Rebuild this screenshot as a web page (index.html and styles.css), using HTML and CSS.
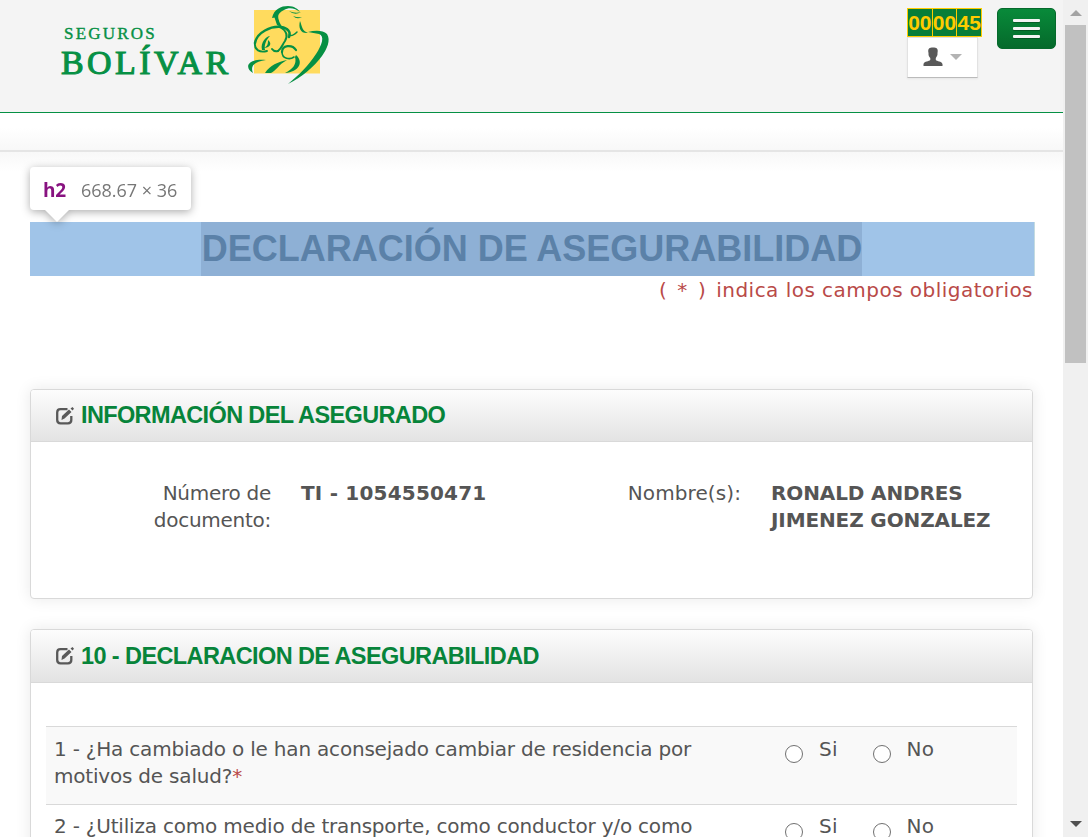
FILE: index.html
```html
<!DOCTYPE html>
<html lang="es">
<head>
<meta charset="utf-8">
<title>Declaración de asegurabilidad</title>
<link rel="stylesheet" href="styles.css">
</head>
<body>
<div class="page">
  <header class="topbar">
    <div class="brand">
      <div class="brand-name"><span class="brand-small">SEGUROS</span><span class="brand-big">BOLÍVAR</span></div>
      <svg class="brand-mark" viewBox="0 0 100 90" width="100" height="90">
        <rect x="14" y="10" width="66" height="63.500" fill="#ffdb5e"/>
        <g fill="#069044">
          <path d="M32 18C34 9 41 6 48 6C54 6 58 9 60 12C55 8 49 7 44 10C40 12 38 14 38 17Z"/>
          <path d="M34 16L38 15C38 20 40 24 43 28L37 25Z"/>
          <path d="M49 11Q55 14 61 12Q55 16 49 11ZM53 16Q58 18 62 17Q57 20 53 16Z"/>
          <path d="M60 21C62 26 62 31 68 33C61 34 58 28 60 21Z"/>
          <path d="M68 32C75 30 83 30 87 34C91 40 87 49 82 56C74 67 62 77 48 84C59 75 69 65 76 54C82 45 85 36 79 34Z"/>
          <path d="M22 50C20 42 27 36 30 36C26 40 24 45 25 50ZM28 40C33 44 29 48 24 48C28 46 28 43 28 40Z"/>
          <path d="M26 60C14 62 10 66 13 73C4 68 7 58 26 60Z"/>
          <path d="M25 73C30 65 38 62 47 60C38 65 36 71 31 73Z"/>
          <path d="M56 55C64 62 59 72 45 73C53 69 57 64 55 57Z"/>
        </g>
        <g fill="none" stroke="#069044" stroke-linecap="round">
          <path stroke-width="2.500" d="M15 43C17 32 31 26 41 27C48 28 51 32 49 37"/>
          <path stroke-width="2" d="M40 27C47 31 48 36 45 41C42 45 42 48 38 51"/>
          <path stroke-width="1.500" d="M49 35Q52 37 57 32"/>
          <path stroke-width="1.900" d="M15 43C14 50 20 53 27 51M32 49Q34 52 38 51"/>
          <path stroke-width="2.200" d="M42 52C42 45 52 44 56 50"/>
          <path stroke-width="1.600" d="M42 52C42 59 50 60 54 57"/>
        </g>
      </svg>
    </div>
    <div class="tools">
      <div class="session">
        <div class="timer"><span>00</span><span>00</span><span>45</span></div>
        <button class="user" type="button" aria-label="Usuario">
          <svg width="20" height="20" viewBox="0 0 20 20"><path fill="#595959" d="M5.500 6C4.500 1.500 6.500 .500 10 .500S15.500 1.500 14.500 6C14.800 9 13.500 9.500 12.800 11V13C14 14.500 18.500 14 19.500 17V19H.500V17C1.500 14 6 14.500 7.300 13V11C6.500 10 5.200 9 5.500 6Z"/></svg>
          <svg width="12" height="6" viewBox="0 0 12 6"><path fill="#b3b3b3" d="M0 0H12L6 6Z"/></svg>
        </button>
      </div>
      <button class="menu" type="button" aria-label="Menú"><i></i><i></i><i></i></button>
    </div>
  </header>
  <div class="strip"></div>
  <main class="content">
    <div class="title-row">
      <h2 class="title"><span>DECLARACIÓN DE ASEGURABILIDAD</span></h2>
      <div class="inspect"><b>h2</b><span>668.67 × 36</span></div>
    </div>
    <p class="hint"><span class="mark">( * ) </span>indica los campos obligatorios</p>

    <section class="card card-info">
      <h3 class="card-head">
        <svg class="edit" width="20" height="20" viewBox="0 0 20 20"><path fill="none" stroke="#595959" stroke-width="2.300" d="M12.500 3.200H5.500Q2.200 3.200 2.200 6.500V14Q2.200 17.300 5.500 17.300H13Q16.300 17.300 16.300 14V10"/><path fill="#595959" d="M7 10L14 3.500L16.500 6L9.500 12.500L6.500 14ZM15.500 2.500L17.500 1L19 2.800L17.500 4.500Z"/></svg>
        <span>INFORMACIÓN DEL ASEGURADO</span>
      </h3>
      <div class="fields">
        <div class="label">Número de<br>documento:</div>
        <div class="value">TI - 1054550471</div>
        <div class="label label-name">Nombre(s):</div>
        <div class="value value-name">RONALD ANDRES<br>JIMENEZ GONZALEZ</div>
      </div>
    </section>

    <section class="card card-questions">
      <h3 class="card-head">
        <svg class="edit" width="20" height="20" viewBox="0 0 20 20"><path fill="none" stroke="#595959" stroke-width="2.300" d="M12.500 3.200H5.500Q2.200 3.200 2.200 6.500V14Q2.200 17.300 5.500 17.300H13Q16.300 17.300 16.300 14V10"/><path fill="#595959" d="M7 10L14 3.500L16.500 6L9.500 12.500L6.500 14ZM15.500 2.500L17.500 1L19 2.800L17.500 4.500Z"/></svg>
        <span>10 - DECLARACION DE ASEGURABILIDAD</span>
      </h3>
      <div class="questions">
        <div class="question">
          <div class="text">1 - ¿Ha cambiado o le han aconsejado cambiar de residencia por<br>motivos de salud?<em>*</em></div>
          <label class="option"><input type="radio" name="q1">Si</label>
          <label class="option"><input type="radio" name="q1">No</label>
        </div>
        <div class="question">
          <div class="text">2 - ¿Utiliza como medio de transporte, como conductor y/o como</div>
          <label class="option"><input type="radio" name="q2">Si</label>
          <label class="option"><input type="radio" name="q2">No</label>
        </div>
      </div>
    </section>
  </main>
</div>
<div class="scrollbar">
  <svg class="arrow" width="12" height="6" viewBox="0 0 12 6"><path fill="#a3a3a3" d="M0 6H12L6 0Z"/></svg>
  <div class="thumb"></div>
  <svg class="arrow arrow-down" width="12" height="6" viewBox="0 0 12 6"><path fill="#505050" d="M0 0H12L6 6Z"/></svg>
</div>
</body>
</html>
```
FILE: styles.css
```css
* { box-sizing: border-box; }
body {
  margin: 0;
  height: 837px;
  overflow: hidden;
  display: flex;
  background: #fff;
  color: #555;
  font: 20px/27px "DejaVu Sans", sans-serif;
}
.page { width: 1063px; height: 837px; overflow: hidden; }

.topbar {
  height: 113px;
  display: flex;
  justify-content: space-between;
  padding-right: 7px;
  background: #f4f4f4;
  border-bottom: 1px solid #069044;
}
.brand { display: flex; padding-left: 61px; }
.brand-name {
  width: 179px;
  padding-top: 23px;
  display: flex;
  flex-direction: column;
  color: #069044;
  font-family: "Liberation Serif", serif;
  white-space: nowrap;
}
.brand-small { padding-left: 3px; font-size: 17px; line-height: 21px; letter-spacing: 2.2px; -webkit-text-stroke: .4px #069044; }
.brand-big { font-size: 34px; line-height: 37px; letter-spacing: 3.4px; -webkit-text-stroke: 1.1px #069044; }
.brand-mark { display: block; }

.tools { display: flex; gap: 15px; padding-top: 8px; }
.session { width: 75px; }
.timer {
  display: flex;
  width: 75px;
  height: 29px;
  border: 1px solid #fc0;
  background: #087e38;
  color: #fc0;
  font: bold 21px/28px "Liberation Sans", sans-serif;
}
.timer span { flex: 1; text-align: center; }
.timer span + span { border-left: 1px solid #fc0; }
.user {
  width: 71px;
  height: 41px;
  display: flex;
  align-items: center;
  justify-content: center;
  gap: 7px;
  padding: 0 0 1px;
  border: 1px solid #e2e2e2;
  border-bottom-color: #bbb;
  background: #fff;
  box-shadow: 0 1px 2px rgba(0,0,0,.06);
}
.menu {
  width: 59px;
  height: 41px;
  display: flex;
  flex-direction: column;
  align-items: center;
  justify-content: center;
  gap: 5px;
  padding: 0;
  border: 1px solid #066a2c;
  border-radius: 5px;
  background: linear-gradient(#088a3a, #056a2b);
}
.menu i { width: 27px; height: 3px; border-radius: 1px; background: #f4f4f4; box-shadow: 0 1px 0 rgba(0,0,0,.25); }
.strip {
  height: 39px;
  border-bottom: 2px solid #e5e5e5;
  background: linear-gradient(#fff 40%, #f8f8f8);
}

.content { padding: 70px 28px 0 30px; background: linear-gradient(#f8f8f8, #fff 20px); }
.title-row { position: relative; }
.title {
  margin: 0;
  height: 54px;
  padding-right: 1px;
  text-align: center;
  background: #a0c4e8;
  border-right: 1px solid #c4dbe0;
  color: #5b81a8;
  font: bold 36px/54px "Liberation Sans", sans-serif;
}
.title span { display: inline-block; padding-left: 1px; background: #8eb0d5; }
.inspect {
  position: absolute;
  left: 0;
  top: -55px;
  width: 161px;
  height: 43px;
  display: flex;
  gap: 15px;
  padding: 2px 0 0 13px;
  align-items: center;
  border-radius: 4px;
  background: #fff;
  filter: drop-shadow(0 2px 4px rgba(0,0,0,.32));
  color: #777;
  font: 18px/24px "Open Sans", sans-serif;
  white-space: nowrap;
}
.inspect b { color: #881280; font-size: 19px; letter-spacing: -.2px; }
.inspect::after {
  content: "";
  position: absolute;
  left: 15px;
  top: 43px;
  border: 12px solid transparent;
  border-top-color: #fff;
  border-bottom: 0;
}
.hint { margin: 1px 2px 85px 0; text-align: right; color: #b94a48; letter-spacing: .47px; }
.mark { letter-spacing: 2.1px; }

.card {
  width: 1003px;
  margin-bottom: 30px;
  border: 1px solid #d9d9d9;
  border-radius: 4px;
  background: #fff;
  box-shadow: 0 0 16px rgba(0,0,0,.09);
}
.card-info { height: 210px; }
.card-questions { height: 260px; }
.card-head {
  margin: 0;
  height: 52px;
  display: flex;
  align-items: center;
  gap: 6px;
  padding-left: 24px;
  border-bottom: 1px solid #d9d9d9;
  border-radius: 3px 3px 0 0;
  background: linear-gradient(#fdfdfd, #e3e3e3);
  color: #07843a;
  font: bold 23.5px/50px "Liberation Sans", sans-serif;
  letter-spacing: -.63px;
}
.card-info .card-head span { padding-bottom: 2px; }
.card-questions .card-head { height: 53px; letter-spacing: -.6px; }
.fields {
  display: grid;
  grid-template-columns: 240px 245px 225px 1fr;
  padding-top: 38px;
}
.label { text-align: right; letter-spacing: -.27px; }
.label-name { letter-spacing: .1px; }
.value { padding-left: 30px; font-weight: bold; letter-spacing: .2px; }
.value-name { letter-spacing: -.12px; }

.questions { padding: 43px 15px 0; }
.question {
  display: flex;
  height: 78px;
  padding: 9px 8px 0;
  border-top: 1px solid #d9d9d9;
}
.question:nth-child(odd) { background: #f9f9f9; }
.question:nth-child(even) { padding-top: 8px; }
.question:nth-child(even) input { margin-top: 10px; }
.text { width: 731px; white-space: nowrap; letter-spacing: -.2px; }
.text em { color: #b94a48; font-style: normal; }
.option { width: 87.5px; display: flex; gap: 16px; letter-spacing: .4px; }
.option input { appearance: none; flex: none; margin: 9px 0 0; width: 18px; height: 18px; border: 1px solid #707070; border-radius: 50%; background: #fff; }

.scrollbar {
  width: 25px;
  display: flex;
  flex-direction: column;
  align-items: center;
  padding: 10px 0;
  background: #f0f0f0;
}
.thumb { width: 21px; height: 338px; margin: 9px 0 auto; background: #c1c1c1; }
```
